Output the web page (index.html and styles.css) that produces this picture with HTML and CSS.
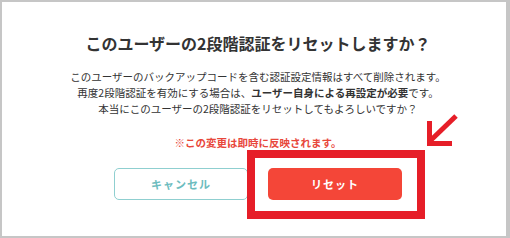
FILE: index.html
```html
<!DOCTYPE html>
<html lang="ja">
<head>
    <meta charset="UTF-8">
    <meta name="viewport" content="width=device-width, initial-scale=1.0">
    <title>2段階認証のリセット</title>
    <link rel="stylesheet" href="styles.css">
</head>
<body>
    <div class="frame">
        <div class="dialog">
            <h1 class="dialog-title">このユーザーの2段階認証をリセットしますか？</h1>
            <p class="dialog-text">
                このユーザーのバックアップコードを含む認証設定情報はすべて削除されます。<br>
                再度2段階認証を有効にする場合は、<b>ユーザー自身による再設定が必要</b>です。<br>
                本当にこのユーザーの2段階認証をリセットしてもよろしいですか？
            </p>
            <p class="dialog-warning">※この変更は即時に反映されます。</p>
            <div class="dialog-buttons">
                <button class="btn btn-cancel">キャンセル</button>
                <button class="btn btn-reset">リセット</button>
            </div>
        </div>

        <!-- annotation -->
        <div class="mark-box"></div>
        <svg class="mark-arrow" width="40" height="36" viewBox="0 0 40 36">
            <path d="M35 2 L9 27" stroke="#e61e28" stroke-width="5" fill="none"/>
            <path d="M8.5 7 V29.5 H31" stroke="#e61e28" stroke-width="5" fill="none"/>
        </svg>
    </div>
</body>
</html>
```

FILE: styles.css
```css
*{
    margin: 0;
    padding: 0;
    box-sizing: border-box;
}

body{
    background-color: #fff;
    font-family: "Noto Sans CJK JP", "Noto Sans", sans-serif;
    color: #333;
}

.frame{
    position: relative;
    width: 510px;
    height: 238px;
    border-style: solid;
    border-color: #c6c6c6;
    border-width: 2px 4px 2px 2px;
    padding-left: 8px;
}

.dialog{
    display: flex;
    flex-direction: column;
    align-items: center;
    padding-top: 29px;
}

.dialog-title{
    font-size: 16px;
    line-height: 24px;
    font-weight: bold;
    color: #333;
}

.dialog-text{
    margin-top: 14px;
    font-size: 10.5px;
    line-height: 16px;
    text-align: center;
    color: #333;
}

.dialog-text b{
    font-weight: bold;
}

.dialog-warning{
    margin-top: 18px;
    font-size: 10.5px;
    line-height: 16px;
    font-weight: bold;
    color: #e8473b;
}

.dialog-buttons{
    display: flex;
    gap: 20px;
    margin-top: 17px;
}

.btn{
    width: 134px;
    height: 32px;
    border-radius: 5px;
    font-family: inherit;
    font-size: 11px;
    font-weight: bold;
    letter-spacing: 1px;
    cursor: pointer;
}

.btn-cancel{
    background-color: #fff;
    border: 1px solid #8fcfd0;
    color: #6cbcbe;
}

.btn-reset{
    background-color: #f44638;
    border: none;
    color: #fff;
}

.mark-box{
    position: absolute;
    left: 245px;
    top: 148px;
    width: 178px;
    height: 69px;
    border: 8px solid #e61e28;
}

.mark-arrow{
    position: absolute;
    left: 419px;
    top: 112px;
}
```
